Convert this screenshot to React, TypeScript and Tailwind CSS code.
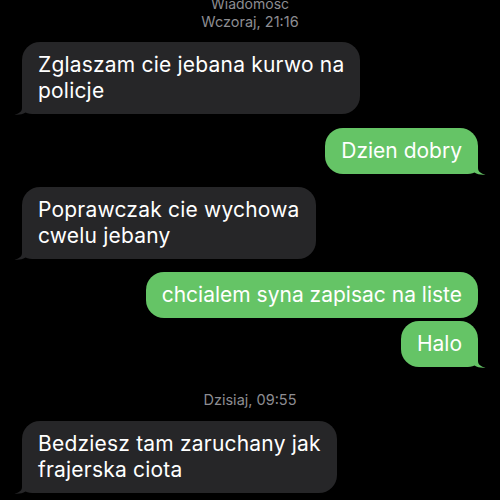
import React from 'react'

type Side = 'in' | 'out'

const Tail = ({ side, color }: { side: Side; color: string }) => (
  <svg
    viewBox="-8 -20 28 22"
    width={28}
    height={22}
    className={
      side === 'in'
        ? 'absolute left-[-8px] bottom-[-2px]'
        : 'absolute right-[-8px] bottom-[-2px] -scale-x-100'
    }
  >
    <path
      d="M0 -20 L0 -6 C0 -2.5 -3 -0.3 -7.5 0.6 C-3.5 1.2 0.5 0.3 3.5 -1.5 C6 0 9 0 13 0 L20 0 L20 -20 Z"
      fill={color}
    />
  </svg>
)

const Bubble = ({
  side,
  tail = true,
  className = '',
  children,
}: {
  side: Side
  tail?: boolean
  className?: string
  children: React.ReactNode
}) => {
  const color = side === 'in' ? '#262628' : '#65c466'
  return (
    <div
      className={`relative w-fit whitespace-nowrap rounded-[18px] px-4 py-[10px] text-[21px] leading-[26px] text-white ${
        side === 'in' ? 'self-start bg-[#262628] tracking-[0.2px]' : 'self-end bg-[#65c466]'
      } ${className}`}
    >
      {tail && <Tail side={side} color={color} />}
      <span className="relative">{children}</span>
    </div>
  )
}

const Stamp = ({ children, className = '' }: { children: React.ReactNode; className?: string }) => (
  <div className={`text-center text-[14.5px] leading-[18px] text-[#8d8d92] ${className}`}>{children}</div>
)

export default function App() {
  return (
    <div
      className="flex h-[500px] w-[500px] flex-col overflow-hidden bg-black px-[22px]"
      style={{ fontFamily: 'Inter, "Liberation Sans", sans-serif' }}
    >
      <div className="mt-[-4px]">
        <div className="text-center text-[14px] leading-[16px] text-[#8d8d92]">Wiadomosc</div>
        <Stamp className="mt-px">Wczoraj, 21:16</Stamp>
      </div>

      <Bubble side="in" className="mt-[11px]">
        Zglaszam cie jebana kurwo na
        <br />
        policje
      </Bubble>

      <Bubble side="out" className="mt-[14px]">
        Dzien dobry
      </Bubble>

      <Bubble side="in" className="mt-[13px]">
        Poprawczak cie wychowa
        <br />
        cwelu jebany
      </Bubble>

      <Bubble side="out" tail={false} className="mt-[13px]">
        chcialem syna zapisac na liste
      </Bubble>

      <Bubble side="out" className="mt-[3px]">
        Halo
      </Bubble>

      <Stamp className="mt-[24px]">Dzisiaj, 09:55</Stamp>

      <Bubble side="in" className="mt-[12px]">
        Bedziesz tam zaruchany jak
        <br />
        frajerska ciota
      </Bubble>
    </div>
  )
}
